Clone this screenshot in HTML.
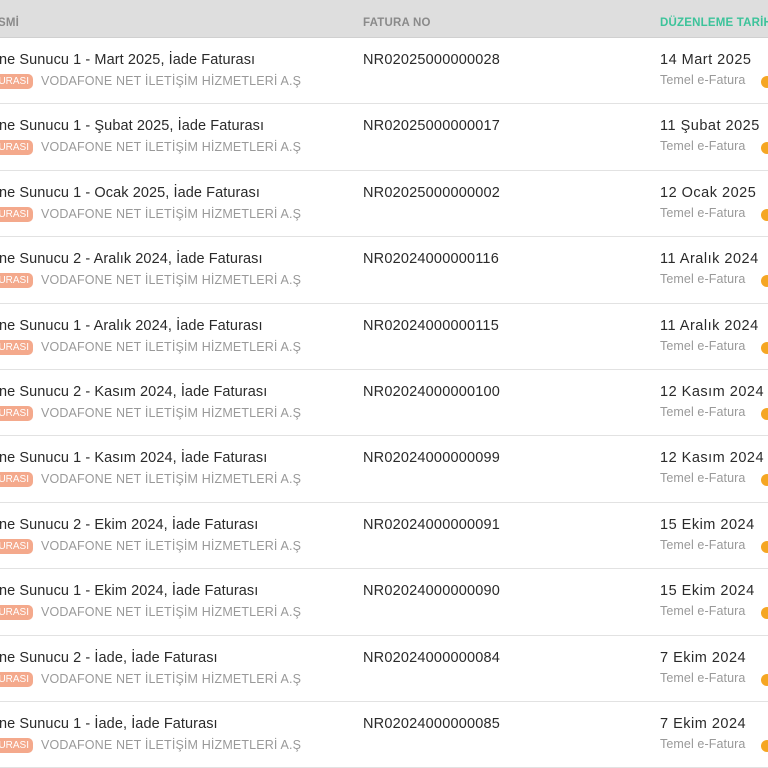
<!DOCTYPE html>
<html><head><meta charset="utf-8"><style>
*{margin:0;padding:0;box-sizing:border-box}
body{width:768px;height:768px;overflow:hidden;background:#fff;font-family:"Liberation Sans",sans-serif;position:relative}
.hdr{position:absolute;left:0;top:0;width:768px;height:38px;background:#dedede;border-bottom:1px solid #d0d0d0}
.h{position:absolute;top:17px;font-size:11.5px;font-weight:bold;color:#8a8a8a;letter-spacing:.2px}
.row{position:absolute;left:0;width:768px;height:66.4px;border-bottom:1px solid #e2e2e2;background:#fff}
.t{position:absolute;left:-1px;top:14px;font-size:14.5px;color:#2a2a2a;white-space:nowrap;letter-spacing:.08px}
.b{position:absolute;left:-6px;top:36px;width:39px;height:15px;border-radius:5px;background:#f4a98c;color:#fff;font-size:10px;line-height:15px;text-align:right;padding-right:4px;overflow:hidden}
.s{position:absolute;left:41px;top:36px;font-size:12.5px;color:#999;white-space:nowrap;letter-spacing:.15px}
.n{position:absolute;left:363px;top:14px;font-size:14.5px;color:#2a2a2a;letter-spacing:.2px}
.d{position:absolute;left:660px;top:14px;font-size:14.5px;color:#2a2a2a;white-space:nowrap;letter-spacing:.5px}
.e{position:absolute;left:660px;top:35px;font-size:12.5px;color:#999;letter-spacing:.1px}
.dot{position:absolute;left:761px;top:38px;width:12px;height:12px;border-radius:50%;background:#f5a623}
</style></head><body>
<div class="hdr">
<div class="h" style="left:-2px">SMİ</div>
<div class="h" style="left:363px">FATURA NO</div>
<div class="h" style="left:660px;color:#3cc39a;white-space:nowrap">DÜZENLEME TARİHİ</div>
</div>

<div class="row" style="top:38px"><div class="t">ne Sunucu 1 - Mart 2025, İade Faturası</div><div class="b">URASI</div><div class="s">VODAFONE NET İLETİŞİM HİZMETLERİ A.Ş</div><div class="n">NR02025000000028</div><div class="d">14 Mart 2025</div><div class="e">Temel e-Fatura</div><div class="dot"></div></div>
<div class="row" style="top:104.4px"><div class="t">ne Sunucu 1 - Şubat 2025, İade Faturası</div><div class="b">URASI</div><div class="s">VODAFONE NET İLETİŞİM HİZMETLERİ A.Ş</div><div class="n">NR02025000000017</div><div class="d">11 Şubat 2025</div><div class="e">Temel e-Fatura</div><div class="dot"></div></div>
<div class="row" style="top:170.8px"><div class="t">ne Sunucu 1 - Ocak 2025, İade Faturası</div><div class="b">URASI</div><div class="s">VODAFONE NET İLETİŞİM HİZMETLERİ A.Ş</div><div class="n">NR02025000000002</div><div class="d">12 Ocak 2025</div><div class="e">Temel e-Fatura</div><div class="dot"></div></div>
<div class="row" style="top:237.2px"><div class="t">ne Sunucu 2 - Aralık 2024, İade Faturası</div><div class="b">URASI</div><div class="s">VODAFONE NET İLETİŞİM HİZMETLERİ A.Ş</div><div class="n">NR02024000000116</div><div class="d">11 Aralık 2024</div><div class="e">Temel e-Fatura</div><div class="dot"></div></div>
<div class="row" style="top:303.6px"><div class="t">ne Sunucu 1 - Aralık 2024, İade Faturası</div><div class="b">URASI</div><div class="s">VODAFONE NET İLETİŞİM HİZMETLERİ A.Ş</div><div class="n">NR02024000000115</div><div class="d">11 Aralık 2024</div><div class="e">Temel e-Fatura</div><div class="dot"></div></div>
<div class="row" style="top:370px"><div class="t">ne Sunucu 2 - Kasım 2024, İade Faturası</div><div class="b">URASI</div><div class="s">VODAFONE NET İLETİŞİM HİZMETLERİ A.Ş</div><div class="n">NR02024000000100</div><div class="d">12 Kasım 2024</div><div class="e">Temel e-Fatura</div><div class="dot"></div></div>
<div class="row" style="top:436.4px"><div class="t">ne Sunucu 1 - Kasım 2024, İade Faturası</div><div class="b">URASI</div><div class="s">VODAFONE NET İLETİŞİM HİZMETLERİ A.Ş</div><div class="n">NR02024000000099</div><div class="d">12 Kasım 2024</div><div class="e">Temel e-Fatura</div><div class="dot"></div></div>
<div class="row" style="top:502.8px"><div class="t">ne Sunucu 2 - Ekim 2024, İade Faturası</div><div class="b">URASI</div><div class="s">VODAFONE NET İLETİŞİM HİZMETLERİ A.Ş</div><div class="n">NR02024000000091</div><div class="d">15 Ekim 2024</div><div class="e">Temel e-Fatura</div><div class="dot"></div></div>
<div class="row" style="top:569.2px"><div class="t">ne Sunucu 1 - Ekim 2024, İade Faturası</div><div class="b">URASI</div><div class="s">VODAFONE NET İLETİŞİM HİZMETLERİ A.Ş</div><div class="n">NR02024000000090</div><div class="d">15 Ekim 2024</div><div class="e">Temel e-Fatura</div><div class="dot"></div></div>
<div class="row" style="top:635.6px"><div class="t">ne Sunucu 2 - İade, İade Faturası</div><div class="b">URASI</div><div class="s">VODAFONE NET İLETİŞİM HİZMETLERİ A.Ş</div><div class="n">NR02024000000084</div><div class="d">7 Ekim 2024</div><div class="e">Temel e-Fatura</div><div class="dot"></div></div>
<div class="row" style="top:702px"><div class="t">ne Sunucu 1 - İade, İade Faturası</div><div class="b">URASI</div><div class="s">VODAFONE NET İLETİŞİM HİZMETLERİ A.Ş</div><div class="n">NR02024000000085</div><div class="d">7 Ekim 2024</div><div class="e">Temel e-Fatura</div><div class="dot"></div></div>
</body></html>
